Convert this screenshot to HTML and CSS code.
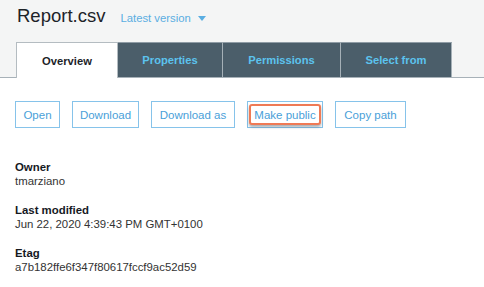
FILE: index.html
```html
<!DOCTYPE html>
<html>
<head>
<meta charset="utf-8">
<link rel="stylesheet" href="styles.css">
</head>
<body>
<div class="header">
  <div class="title-row">
    <span class="title">Report.csv</span>
    <span class="version">Latest version <span class="caret"></span></span>
  </div>
  <div class="tabs">
    <div class="tab active t1">Overview</div>
    <div class="tab t2">Properties</div>
    <div class="tab t3">Permissions</div>
    <div class="tab t4">Select from</div>
  </div>
</div>
<div class="content">
  <div class="actions">
    <button class="btn b-open">Open</button>
    <button class="btn b-dl">Download</button>
    <button class="btn b-dla">Download as</button>
    <button class="btn b-mp"><span class="highlight">Make public</span></button>
    <button class="btn b-cp">Copy path</button>
  </div>
  <dl class="meta">
    <dt>Owner</dt>
    <dd>tmarziano</dd>
    <dt>Last modified</dt>
    <dd>Jun 22, 2020 4:39:43 PM GMT+0100</dd>
    <dt>Etag</dt>
    <dd>a7b182ffe6f347f80617fccf9ac52d59</dd>
  </dl>
</div>
</body>
</html>
```
FILE: styles.css
```css
html, body {
  margin: 0;
  padding: 0;
  background: #ffffff;
  font-family: "Liberation Sans", Arial, sans-serif;
}
.header {
  background: #f4f5f5;
  height: 77px;
  border-bottom: 1px solid #a7b1b8;
  position: relative;
}
.title-row {
  display: flex;
  align-items: baseline;
  padding-left: 17px;
  height: 42px;
  box-sizing: border-box;
  padding-top: 5px;
}
.title {
  font-size: 18.5px;
  color: #1d2328;
}
.version {
  margin-left: 15px;
  font-size: 11.3px;
  color: #5aaee2;
  display: flex;
  align-items: center;
}
.caret {
  display: inline-block;
  width: 0;
  height: 0;
  border-left: 4px solid transparent;
  border-right: 4px solid transparent;
  border-top: 5px solid #5aaee2;
  margin-left: 7px;
  margin-top: 1px;
}
.tabs {
  display: flex;
  padding-left: 16px;
  height: 35px;
}
.tab {
  box-sizing: border-box;
  height: 35px;
  display: flex;
  align-items: center;
  justify-content: center;
  font-size: 11.2px;
  font-weight: bold;
  color: #5cc3ee;
  background: #4b5e6a;
  border-top: 1px solid #8f9ca5;
  border-right: 1px solid #a5b0b7;
}
.tab.active {
  background: #ffffff;
  color: #1d2328;
  border: 1px solid #b4bcc1;
  border-bottom: none;
  height: 36px;
  position: relative;
  z-index: 1;
}
.t1 { width: 102px; }
.t2 { width: 105px; }
.t3 { width: 118px; }
.t4 { width: 111px; }
.content {
  padding: 23px 15px 0 15px;
}
.actions {
  display: flex;
  gap: 12px;
}
.btn {
  box-sizing: border-box;
  height: 27px;
  border: 1px solid #86c3ea;
  background: #ffffff;
  color: #4a9fd9;
  font-family: "Liberation Sans", Arial, sans-serif;
  font-size: 11.5px;
  padding: 0;
  display: flex;
  align-items: center;
  justify-content: center;
}
.b-open { width: 45px; }
.b-dl { width: 67px; }
.b-dla { width: 84px; }
.b-mp { width: 76px; justify-content: flex-end; padding-right: 1px; }
.b-cp { width: 71px; }
.highlight {
  display: flex;
  align-items: center;
  justify-content: center;
  box-sizing: border-box;
  width: 72px;
  height: 21px;
  border: 2px solid #ef7a55;
  border-radius: 3px;
  box-shadow: 0 2px 3px rgba(60, 70, 80, 0.45);
  background: #ffffff;
}
.meta {
  margin: 32px 0 0 0;
  font-size: 11.4px;
  color: #222;
}
.meta dt {
  font-weight: bold;
  color: #16191f;
  line-height: 14px;
}
.meta dd {
  margin: 0 0 15px 0;
  line-height: 14px;
  color: #333;
}
```
